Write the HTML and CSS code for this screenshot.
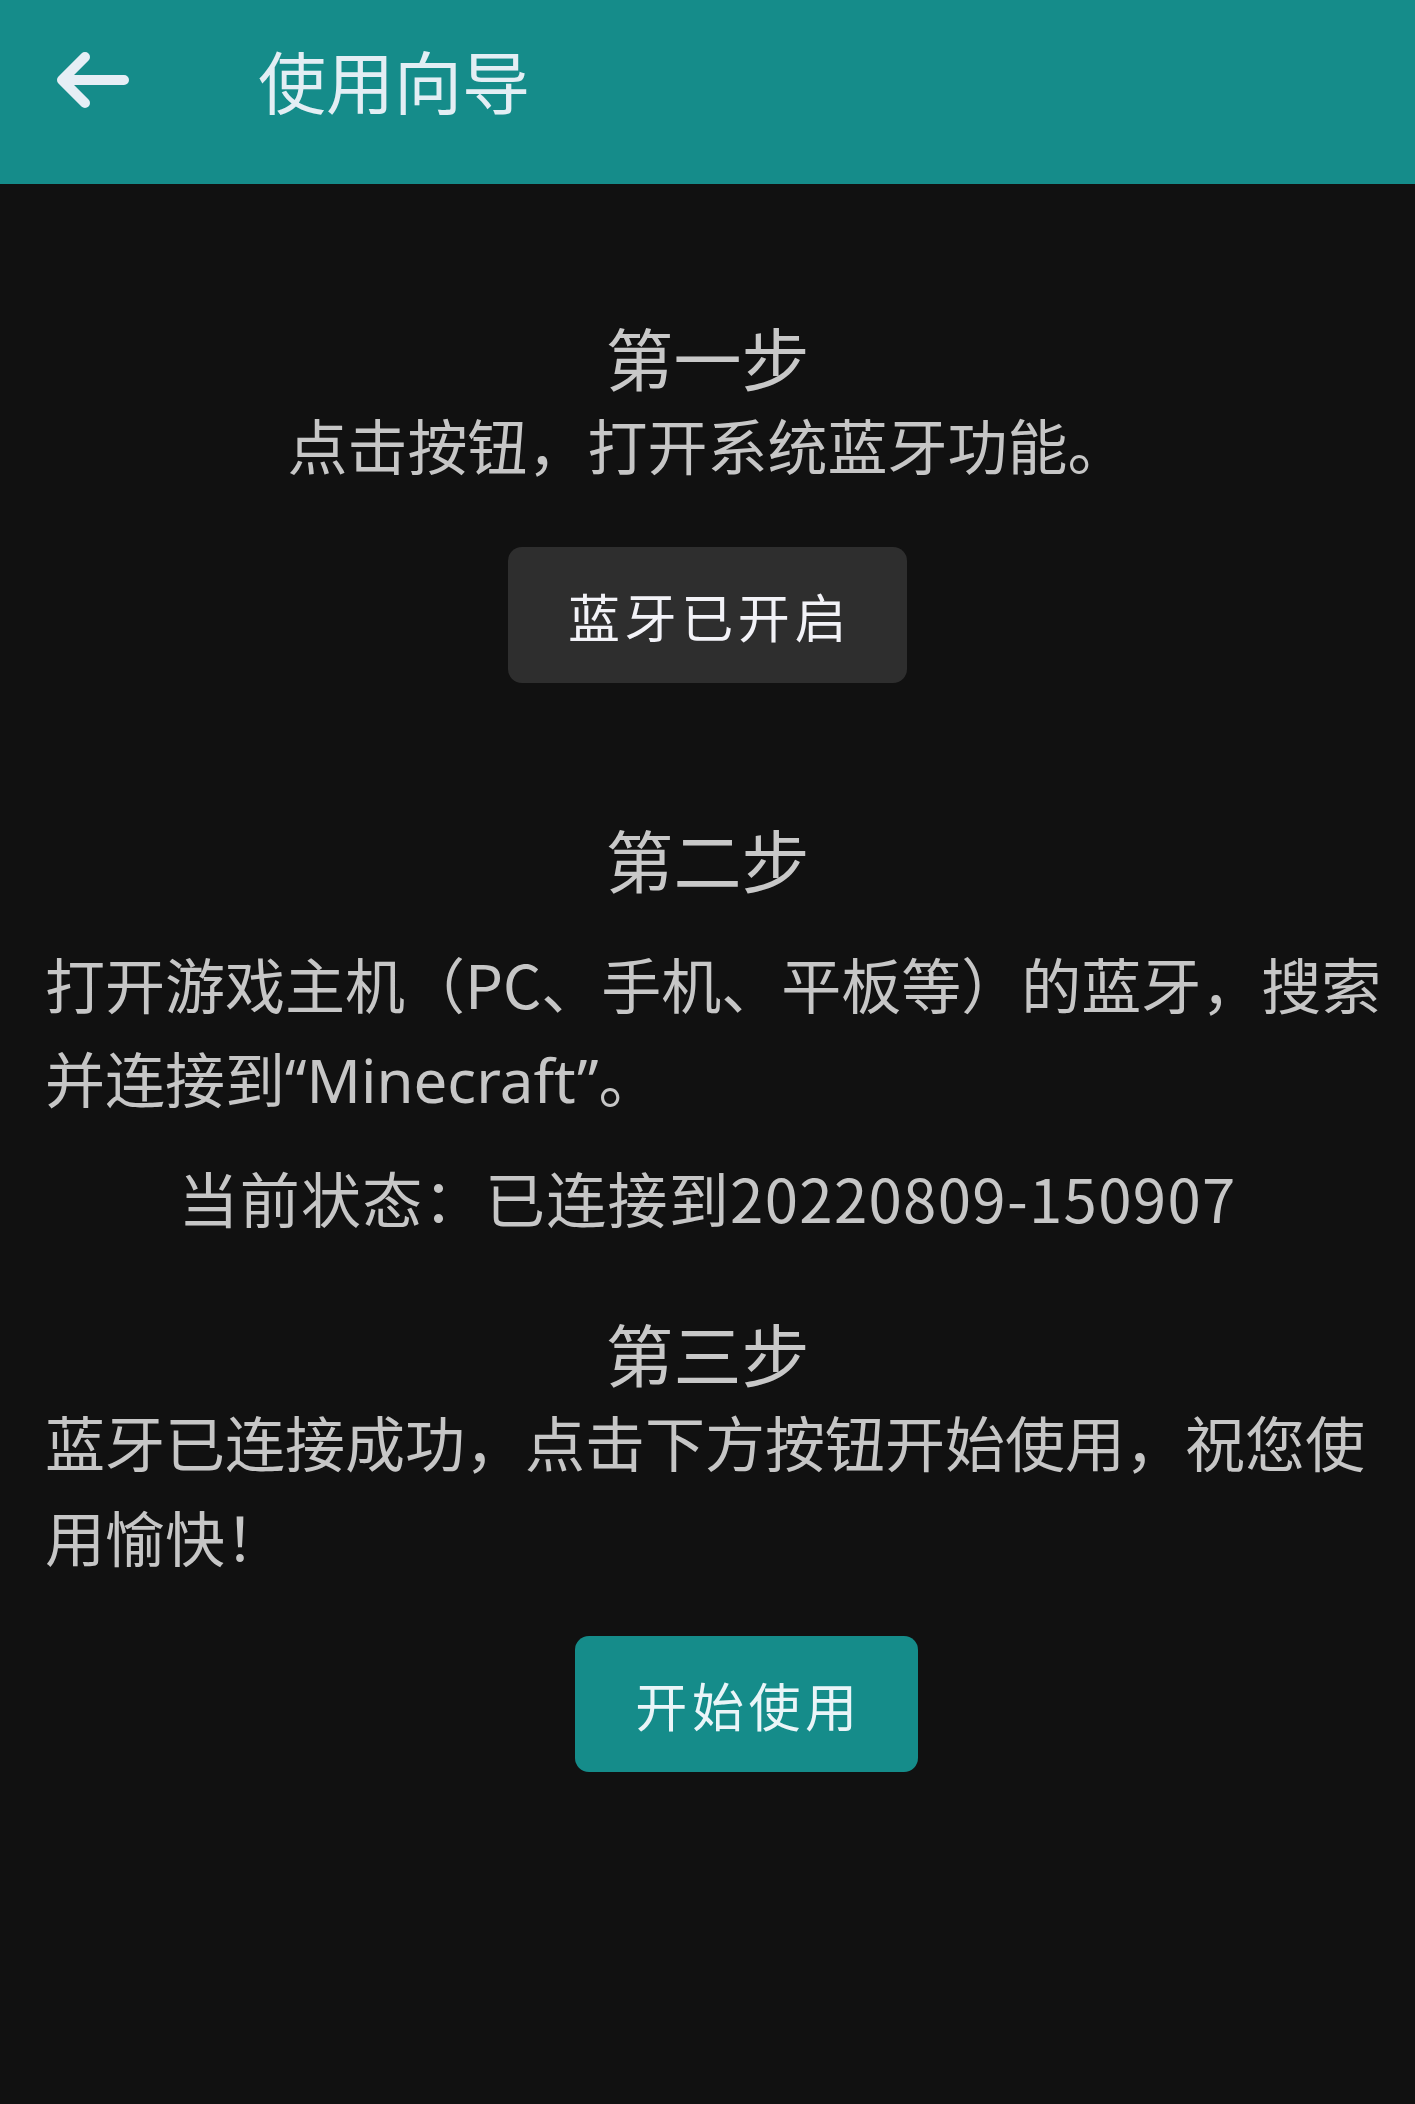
FILE: index.html
```html
<!DOCTYPE html>
<html lang="zh-CN">
<head>
<meta charset="utf-8">
<title>使用向导</title>
<link rel="stylesheet" href="styles.css">
</head>
<body>
<header class="appbar">
  <svg class="back" width="80" height="80" viewBox="0 0 80 80" aria-hidden="true">
    <path d="M74 40 H12 M35 17 L12 40 L35 63" fill="none" stroke="#E6EEF5" stroke-width="10" stroke-linecap="round" stroke-linejoin="round"/>
  </svg>
  <h1 class="appbar-title">使用向导</h1>
</header>
<main class="guide">
  <section class="step step-one">
    <h2 class="step-title">第一步</h2>
    <p class="step-sub">点击按钮，打开系统蓝牙功能。</p>
    <div class="btn-row">
      <button class="btn btn-dark">蓝牙已开启</button>
    </div>
  </section>
  <section class="step step-two">
    <h2 class="step-title">第二步</h2>
    <p class="step-para">打开游戏主机（PC、手机、平板等）的蓝牙，搜索并连接到<span class="latin">“Minecraft”</span>。</p>
    <p class="status">当前状态：已连接到20220809-150907</p>
  </section>
  <section class="step step-three">
    <h2 class="step-title title-tight">第三步</h2>
    <p class="step-para para-three">蓝牙已连接成功，点击下方按钮开始使用，祝您使用愉快！</p>
    <div class="btn-row btn-row-shift">
      <button class="btn btn-teal">开始使用</button>
    </div>
  </section>
</main>
</body>
</html>
```
FILE: styles.css
```css
html, body {
  margin: 0;
  padding: 0;
}
body {
  background: #111111;
  width: 1415px;
  min-height: 2104px;
  font-family: "Noto Sans CJK SC", "Noto Sans", sans-serif;
  color: #C6C6C6;
}
.appbar {
  height: 184px;
  box-sizing: border-box;
  padding: 0 0 24px 50px;
  background: #158C8A;
  display: flex;
  align-items: center;
}
.back {
  flex: none;
  display: block;
}
.appbar-title {
  margin: 0 0 0 128px;
  font-size: 68px;
  font-weight: 400;
  line-height: 88px;
  color: #E3EEF4;
}
.guide {
  padding: 0 45px;
  display: flex;
  flex-direction: column;
}
.step {
  display: flex;
  flex-direction: column;
}
.step-one {
  margin-top: 129px;
}
.step-two {
  margin-top: 132px;
}
.step-three {
  margin-top: 67px;
}
.step-title {
  margin: 0;
  text-align: center;
  font-size: 68px;
  font-weight: 400;
  line-height: 88px;
  color: #C8C8C8;
}
.title-tight {
  line-height: 84px;
}
.step-sub {
  margin: 0;
  text-align: center;
  font-size: 60px;
  line-height: 86px;
}
.step-para {
  margin: 33px -15px 0 0;
  font-size: 60px;
  line-height: 94px;
  text-align: left;
}
.latin {
  font-family: "Noto Sans", sans-serif;
  line-height: 1;
}
.para-three {
  margin-top: -2px;
  line-height: 95px;
}
.status {
  margin: 26px 0 0;
  text-align: center;
  font-size: 60px;
  line-height: 94px;
  letter-spacing: 1.3px;
}
.btn-row {
  display: flex;
  justify-content: center;
  margin-top: 60px;
}
.btn-row-shift {
  margin-top: 53px;
  padding-left: 78px;
}
.btn {
  height: 136px;
  padding: 0 56px 0 60px;
  border: none;
  border-radius: 14px;
  font-family: "Noto Sans CJK SC", "Noto Sans", sans-serif;
  font-size: 52px;
  letter-spacing: 4.6px;
  font-weight: 400;
  cursor: pointer;
}
.btn-dark {
  background: #2E2E2E;
  color: #F2F2F7;
}
.btn-teal {
  background: #158C8A;
  color: #EAF5F8;
}
```
